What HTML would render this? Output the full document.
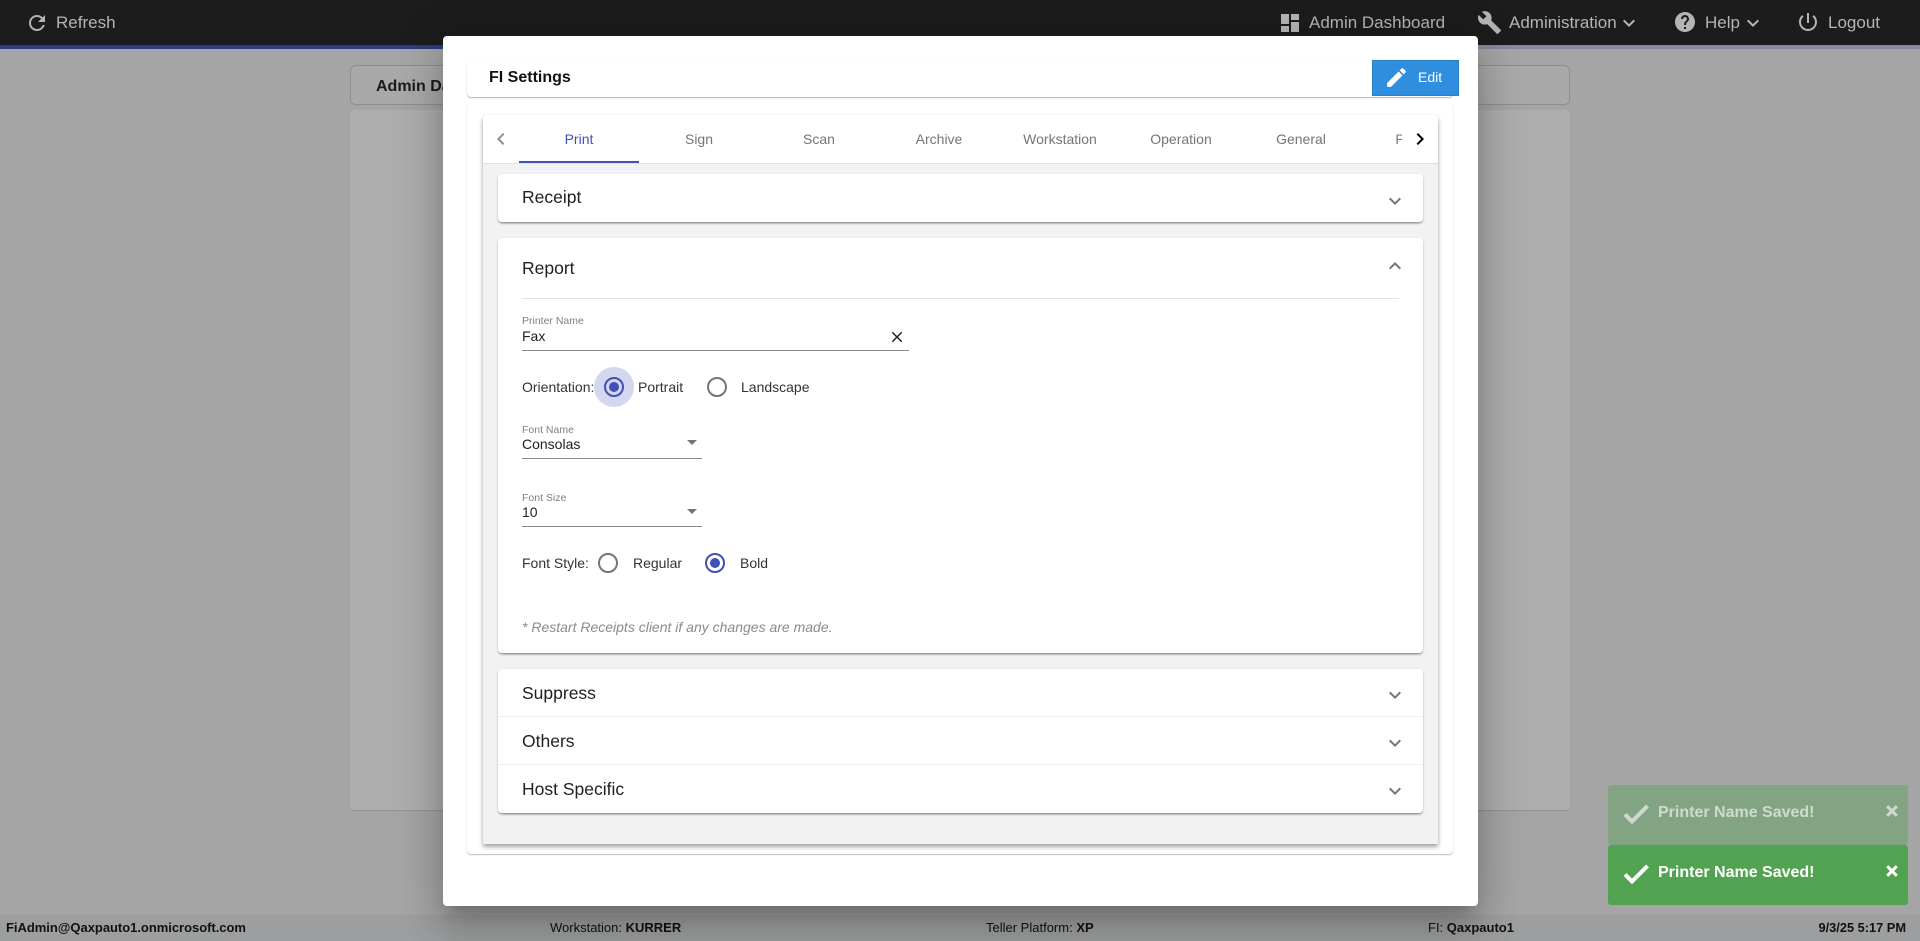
<!DOCTYPE html>
<html lang="en"><head><meta charset="utf-8"><title>FI Settings</title>
<style>
*{box-sizing:border-box}
html,body{margin:0;padding:0;width:1920px;height:941px;overflow:hidden;background:#a5a5a5;font-family:"Liberation Sans",Arial,sans-serif}
.a{position:absolute;white-space:nowrap}
.t{position:absolute;white-space:nowrap;line-height:20px}
svg{position:absolute;display:block}
.nav{color:#b4b4b4;font-size:17px}
.nav-i{fill:#b4b4b4}
.tab{position:absolute;top:115px;width:120px;height:48px;line-height:48px;text-align:center;font-size:14px;color:#757575}
.panel{position:absolute;left:498px;width:925px;background:#fff;border-radius:4px;box-shadow:0 2px 2px -1px rgba(0,0,0,.45),0 1px 3px rgba(0,0,0,.12)}
.h{font-size:17.5px;color:#212121}
.chev{fill:#757575}
.lab{font-size:10.5px;color:#808080}
.val{font-size:14px;color:#212121}
.rad{font-size:14px;color:#333}
.line{position:absolute;height:1px;background:#8c8c8c}
.radio{position:absolute;width:20px;height:20px;border-radius:50%;border:2px solid #757575}
.on{border-color:#3f51b5}
.on::after{content:"";position:absolute;left:3px;top:3px;width:10px;height:10px;border-radius:50%;background:#3f51b5}
.foot{position:absolute;top:919px;line-height:18px;font-size:13px;color:#111;white-space:nowrap}
.toast{position:absolute;left:1608px;width:300px;height:60px;background:#51a351;border-radius:3px}
</style></head>
<body>
<!-- page under overlay -->
<div class="a" style="left:0;top:0;width:1920px;height:45px;background:#1c1c1c"></div>
<div class="a" style="left:0;top:45px;width:1920px;height:4px;background:linear-gradient(90deg,#2e3a82 0,#2e3a82 900px,#87889f 1000px,#87889f 100%)"></div>
<div class="a" style="left:0;top:49px;width:1920px;height:866px;background:#a5a5a5"></div>
<div class="a" style="left:350px;top:65px;width:1220px;height:40px;border:1px solid #8e8e8e;border-radius:6px;background:#a9a9a9"></div>
<div class="t" style="left:376px;top:77px;font-size:16px;font-weight:bold;color:#1b1b1b">Admin Dashboard</div>
<div class="a" style="left:350px;top:110px;width:1220px;height:700px;border-radius:4px;background:#adadad;box-shadow:0 1px 1px rgba(0,0,0,.12)"></div>
<div class="a" style="left:0;top:915px;width:1920px;height:26px;background:#9c9e9f"></div>

<svg style="left:25px;top:11px" width="24" height="24" viewBox="0 0 24 24" class="nav-i"><path d="M17.65 6.35C16.2 4.9 14.21 4 12 4c-4.42 0-7.99 3.58-7.99 8s3.57 8 7.99 8c3.73 0 6.84-2.55 7.73-6h-2.08c-.82 2.33-3.04 4-5.65 4-3.31 0-6-2.69-6-6s2.69-6 6-6c1.66 0 3.14.69 4.22 1.78L13 11h7V4l-2.35 2.35z"/></svg>
<div class="t nav" style="left:56px;top:13px">Refresh</div>
<svg style="left:1278px;top:11px" width="24" height="24" viewBox="0 0 24 24" class="nav-i"><path d="M3 13h8V3H3v10zm0 8h8v-6H3v6zm10 0h8V11h-8v10zm0-18v6h8V3h-8z"/></svg>
<div class="t nav" style="left:1309px;top:13px">Admin Dashboard</div>
<svg style="left:1477px;top:10px" width="25" height="25" viewBox="0 0 24 24" class="nav-i"><path d="M22.7 19l-9.1-9.1c.9-2.3.4-5-1.5-6.9-2-2-5-2.4-7.4-1.3L9 6 6 9 1.6 4.7C.4 7.1.9 10.1 2.9 12.1c1.9 1.9 4.6 2.4 6.9 1.5l9.1 9.1c.4.4 1 .4 1.4 0l2.3-2.3c.5-.4.5-1.1.1-1.4z"/></svg>
<div class="t nav" style="left:1509px;top:13px">Administration</div>
<svg style="left:1617px;top:11px" width="24" height="24" viewBox="0 0 24 24" class="nav-i"><path d="M16.59 8.59L12 13.17 7.41 8.59 6 10l6 6 6-6z"/></svg>
<svg style="left:1673px;top:10px" width="24" height="24" viewBox="0 0 24 24" class="nav-i"><path d="M12 2C6.48 2 2 6.48 2 12s4.48 10 10 10 10-4.48 10-10S17.52 2 12 2zm1 17h-2v-2h2v2zm2.07-7.75l-.9.92C13.45 12.9 13 13.5 13 15h-2v-.5c0-1.1.45-2.1 1.17-2.83l1.24-1.26c.37-.36.59-.86.59-1.41 0-1.1-.9-2-2-2s-2 .9-2 2H8c0-2.21 1.79-4 4-4s4 1.79 4 4c0 .88-.36 1.68-.93 2.25z"/></svg>
<div class="t nav" style="left:1705px;top:13px">Help</div>
<svg style="left:1741px;top:11px" width="24" height="24" viewBox="0 0 24 24" class="nav-i"><path d="M16.59 8.59L12 13.17 7.41 8.59 6 10l6 6 6-6z"/></svg>
<svg style="left:1796px;top:10px" width="24" height="24" viewBox="0 0 24 24" class="nav-i"><path d="M13 3h-2v10h2V3zm4.83 2.17l-1.42 1.42C17.99 7.86 19 9.81 19 12c0 3.87-3.13 7-7 7s-7-3.13-7-7c0-2.19 1.01-4.14 2.58-5.42L6.17 5.17C4.23 6.82 3 9.26 3 12c0 4.97 4.03 9 9 9s9-4.03 9-9c0-2.74-1.23-5.18-3.17-6.83z"/></svg>
<div class="t nav" style="left:1828px;top:13px">Logout</div>

<div class="foot" style="left:6px;font-weight:bold;letter-spacing:-.03px">FiAdmin@Qaxpauto1.onmicrosoft.com</div>
<div class="foot" style="left:550px">Workstation: <b>KURRER</b></div>
<div class="foot" style="left:986px">Teller Platform: <b>XP</b></div>
<div class="foot" style="left:1428px">FI: <b>Qaxpauto1</b></div>
<div class="foot" style="right:14px;font-weight:bold;font-size:12.8px">9/3/25 5:17 PM</div>

<!-- modal -->
<div class="a" style="left:443px;top:36px;width:1035px;height:870px;background:#fff;border-radius:4px;box-shadow:0 11px 15px -7px rgba(0,0,0,.2),0 24px 38px 3px rgba(0,0,0,.14),0 9px 46px 8px rgba(0,0,0,.12)"></div>
<div class="a" style="left:467px;top:60px;width:986px;height:37px;background:#fff;border-radius:4px;box-shadow:0 1px 1px rgba(0,0,0,.28),0 0 2px rgba(0,0,0,.05)"></div>
<div class="t" style="left:489px;top:68px;font-size:16px;font-weight:bold;color:#111">FI Settings</div>
<div class="a" style="left:1372px;top:60px;width:87px;height:36px;background:#2f8edd;border:1px solid #2a7fc6"></div>
<svg style="left:1384px;top:65px" width="25" height="25" viewBox="0 0 24 24" fill="#fff"><path d="M3 17.25V21h3.75L17.81 9.94l-3.75-3.75L3 17.25zM20.71 7.04c.39-.39.39-1.02 0-1.41l-2.34-2.34c-.39-.39-1.02-.39-1.41 0l-1.83 1.83 3.75 3.75 1.83-1.83z"/></svg>
<div class="t" style="left:1418px;top:67px;font-size:14px;color:#fff">Edit</div>

<div class="a" style="left:467px;top:104px;width:986px;height:750px;background:#fff;border-radius:4px;box-shadow:0 1px 1px rgba(0,0,0,.25),0 0 1px rgba(0,0,0,.04)"></div>
<div class="a" style="left:483px;top:115px;width:955px;height:729px;background:#f2f2f2;border-radius:4px 4px 0 0;box-shadow:0 3px 5px rgba(0,0,0,.32),0 1px 4px rgba(0,0,0,.1)"></div>
<div class="a" style="left:483px;top:115px;width:955px;height:49px;background:#fff;border-bottom:1px solid #dfdfdf;border-radius:4px 4px 0 0"></div>

<svg style="left:489px;top:127px" width="24" height="24" viewBox="0 0 24 24" fill="#8f8f8f"><path d="M15.41 7.41L14 6l-6 6 6 6 1.41-1.41L10.83 12z"/></svg>
<div class="tab" style="left:519px;color:#3f51b5">Print</div>
<div class="a" style="left:519px;top:161px;width:120px;height:2px;background:#3f51b5"></div>
<div class="tab" style="left:639px">Sign</div>
<div class="tab" style="left:759px">Scan</div>
<div class="tab" style="left:879px">Archive</div>
<div class="tab" style="left:1000px">Workstation</div>
<div class="tab" style="left:1121px">Operation</div>
<div class="tab" style="left:1241px">General</div>
<div class="a" style="left:1359px;top:115px;width:43px;height:48px;overflow:hidden"><div class="tab" style="left:0;top:0;padding-left:1px">Printers</div></div>
<svg style="left:1408px;top:127px" width="24" height="24" viewBox="0 0 24 24" fill="#000"><path d="M10 6L8.59 7.41 13.17 12l-4.58 4.59L10 18l6-6z"/></svg>

<div class="panel" style="top:174px;height:48px"></div>
<div class="t h" style="left:522px;top:187px">Receipt</div>
<svg class="chev" style="left:1383px;top:189px" width="24" height="24" viewBox="0 0 24 24"><path d="M16.59 8.59L12 13.17 7.41 8.59 6 10l6 6 6-6z"/></svg>

<div class="panel" style="top:238px;height:415px"></div>
<div class="t h" style="left:522px;top:258px">Report</div>
<svg class="chev" style="left:1383px;top:254px" width="24" height="24" viewBox="0 0 24 24"><path d="M12 8l-6 6 1.41 1.41L12 10.83l4.59 4.58L18 14z"/></svg>
<div class="a" style="left:522px;top:298px;width:877px;height:1px;background:#e2e2e2"></div>

<div class="t lab" style="left:522px;top:311px">Printer Name</div>
<div class="t val" style="left:522px;top:326px">Fax</div>
<svg style="left:888px;top:328px" width="18" height="18" viewBox="0 0 24 24" fill="#222"><path d="M19 6.41L17.59 5 12 10.59 6.41 5 5 6.41 10.59 12 5 17.59 6.41 19 12 13.41 17.59 19 19 17.59 13.41 12z"/></svg>
<div class="line" style="left:522px;top:350px;width:387px"></div>

<div class="t rad" style="left:522px;top:377px">Orientation:</div>
<div class="a" style="left:594px;top:367px;width:40px;height:40px;border-radius:50%;background:#d3d7ef"></div>
<div class="radio on" style="left:604px;top:377px"></div>
<div class="t rad" style="left:638px;top:377px">Portrait</div>
<div class="radio" style="left:707px;top:377px"></div>
<div class="t rad" style="left:741px;top:377px">Landscape</div>

<div class="t lab" style="left:522px;top:420px">Font Name</div>
<div class="t val" style="left:522px;top:434px">Consolas</div>
<svg style="left:687px;top:440px" width="10" height="5" viewBox="0 0 10 5" fill="#757575"><path d="M0 0h10L5 5z"/></svg>
<div class="line" style="left:522px;top:458px;width:180px"></div>

<div class="t lab" style="left:522px;top:488px">Font Size</div>
<div class="t val" style="left:522px;top:502px">10</div>
<svg style="left:687px;top:509px" width="10" height="5" viewBox="0 0 10 5" fill="#757575"><path d="M0 0h10L5 5z"/></svg>
<div class="line" style="left:522px;top:526px;width:180px"></div>

<div class="t rad" style="left:522px;top:553px">Font Style:</div>
<div class="radio" style="left:598px;top:553px"></div>
<div class="t rad" style="left:633px;top:553px">Regular</div>
<div class="radio on" style="left:705px;top:553px"></div>
<div class="t rad" style="left:740px;top:553px">Bold</div>

<div class="t" style="left:522px;top:617px;font-size:14px;font-style:italic;color:#8a8a8a">* Restart Receipts client if any changes are made.</div>

<div class="panel" style="top:669px;height:144px"></div>
<div class="a" style="left:498px;top:716px;width:925px;height:1px;background:#f1f1f1"></div>
<div class="a" style="left:498px;top:764px;width:925px;height:1px;background:#f1f1f1"></div>
<div class="t h" style="left:522px;top:683px">Suppress</div>
<div class="t h" style="left:522px;top:731px">Others</div>
<div class="t h" style="left:522px;top:779px">Host Specific</div>
<svg class="chev" style="left:1383px;top:683px" width="24" height="24" viewBox="0 0 24 24"><path d="M16.59 8.59L12 13.17 7.41 8.59 6 10l6 6 6-6z"/></svg>
<svg class="chev" style="left:1383px;top:731px" width="24" height="24" viewBox="0 0 24 24"><path d="M16.59 8.59L12 13.17 7.41 8.59 6 10l6 6 6-6z"/></svg>
<svg class="chev" style="left:1383px;top:779px" width="24" height="24" viewBox="0 0 24 24"><path d="M16.59 8.59L12 13.17 7.41 8.59 6 10l6 6 6-6z"/></svg>

<!-- toasts -->
<div class="toast" style="top:785px;opacity:.4"></div>
<div class="a" style="left:1608px;top:785px;width:300px;height:60px;opacity:.6">
  <svg style="left:12px;top:13px" width="32" height="32" viewBox="0 0 24 24" fill="#fff"><path d="M9 16.17L4.83 12l-1.42 1.41L9 19 21 7l-1.41-1.41z" stroke="#fff" stroke-width="1"/></svg>
  <div class="t" style="left:50px;top:18px;font-size:16px;font-weight:bold;color:#fff">Printer Name Saved!</div>
  <svg style="left:276px;top:18px" width="16" height="16" viewBox="0 0 24 24" fill="#fff"><path d="M19 6.41L17.59 5 12 10.59 6.41 5 5 6.41 10.59 12 5 17.59 6.41 19 12 13.41 17.59 19 19 17.59 13.41 12z" stroke="#fff" stroke-width="2.5"/></svg>
</div>
<div class="toast" style="top:845px"></div>
<div class="a" style="left:1608px;top:845px;width:300px;height:60px">
  <svg style="left:12px;top:13px" width="32" height="32" viewBox="0 0 24 24" fill="#fff"><path d="M9 16.17L4.83 12l-1.42 1.41L9 19 21 7l-1.41-1.41z" stroke="#fff" stroke-width="1"/></svg>
  <div class="t" style="left:50px;top:18px;font-size:16px;font-weight:bold;color:#fff">Printer Name Saved!</div>
  <svg style="left:276px;top:18px" width="16" height="16" viewBox="0 0 24 24" fill="#fff"><path d="M19 6.41L17.59 5 12 10.59 6.41 5 5 6.41 10.59 12 5 17.59 6.41 19 12 13.41 17.59 19 19 17.59 13.41 12z" stroke="#fff" stroke-width="2.5"/></svg>
</div>
</body></html>
